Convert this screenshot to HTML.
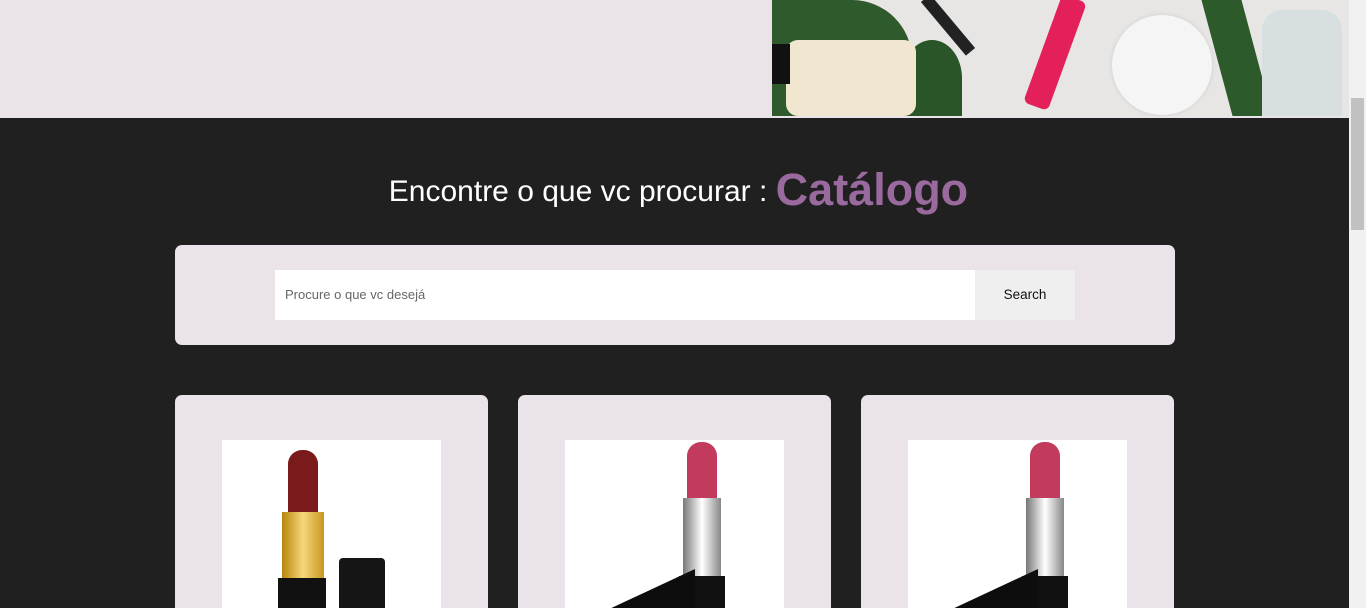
<!DOCTYPE html>
<html><head><meta charset="utf-8"><style>
*{margin:0;padding:0;box-sizing:border-box}
html,body{width:1366px;height:608px;overflow:hidden}
body{background:#202020;font-family:"Liberation Sans",Arial,sans-serif;position:relative}
.top{position:absolute;left:0;top:0;width:1349px;height:118px;background:#ebe3ea}
.img{position:absolute;left:772px;top:0;width:577px;height:116px;background:#e8e6e4;overflow:hidden}
.sb{position:absolute;left:1349px;top:0;width:17px;height:608px;background:#f1f1f1}
.thumb{position:absolute;left:1351px;top:98px;width:13px;height:132px;background:#c1c1c1}
h2{position:absolute;top:164px;left:0;width:1349px;padding-left:8px;text-align:center;color:#fff;font-weight:normal;font-size:30px;white-space:nowrap}
h2 b{color:#9a6a9e;font-size:45px;margin-left:0;vertical-align:-4px}
.search{position:absolute;left:175px;top:245px;width:1000px;height:100px;background:#ebe3ea;border-radius:7px}
.inp{position:absolute;left:100px;top:25px;width:700px;height:50px;background:#fff;color:#666;font-size:13px;padding:17px 10px}
.btn{position:absolute;left:800px;top:25px;width:100px;height:50px;background:#efefef;font-size:13.5px;text-align:center;line-height:50px;color:#111}
.card{position:absolute;top:395px;width:313px;height:213px;background:#ebe3ea;border-radius:7px 7px 0 0;overflow:hidden}
.pic{position:absolute;left:47px;top:45px;width:219px;height:168px;background:#fff;overflow:hidden}
.a{position:absolute}
</style></head><body>
<div class="top"></div>
<div class="img">
 <div class="a" style="left:0;top:0;width:140px;height:116px;background:#2f5a2c;border-radius:0 60px 0 0"></div>
 <div class="a" style="left:130px;top:40px;width:60px;height:76px;background:#2a5528;border-radius:50% 50% 0 0"></div>
 <div class="a" style="left:14px;top:40px;width:130px;height:76px;background:#f1e6cf;border-radius:12px"></div>
 <div class="a" style="left:0;top:44px;width:18px;height:40px;background:#111"></div>
 <div class="a" style="left:170px;top:-10px;width:12px;height:70px;background:#222;transform:rotate(-40deg);"></div>
 <div class="a" style="left:270px;top:-5px;width:26px;height:115px;background:#e4205a;transform:rotate(20deg);border-radius:6px"></div>
 <div class="a" style="left:340px;top:15px;width:100px;height:100px;background:#f5f5f5;border-radius:50%;box-shadow:0 0 4px #ccc"></div>
 <div class="a" style="left:445px;top:0;width:40px;height:116px;background:#2d5a2a;transform:skewX(15deg)"></div>
 <div class="a" style="left:490px;top:10px;width:80px;height:106px;background:#d8dfe0;border-radius:20px 20px 0 0"></div>
</div>
<div class="sb"></div><div class="thumb"></div>
<h2>Encontre o que vc procurar : <b>Catálogo</b></h2>
<div class="search"><div class="inp">Procure o que vc desejá</div><div class="btn">Search</div></div>

<div class="card" style="left:175px"><div class="pic">
 <div class="a" style="left:66px;top:10px;width:30px;height:64px;background:#7a1a1a;border-radius:14px 14px 0 0"></div>
 <div class="a" style="left:60px;top:72px;width:42px;height:68px;background:linear-gradient(90deg,#b8860b,#f5d77a,#c8961f)"></div>
 <div class="a" style="left:56px;top:138px;width:48px;height:70px;background:#111"></div>
 <div class="a" style="left:117px;top:118px;width:46px;height:90px;background:#151515;border-radius:4px"></div>
</div></div>
<div class="card" style="left:518px"><div class="pic">
 <div class="a" style="left:122px;top:2px;width:30px;height:60px;background:#c23a5c;border-radius:14px 14px 0 0"></div>
 <div class="a" style="left:118px;top:58px;width:38px;height:80px;background:linear-gradient(90deg,#777,#fff,#888)"></div>
 <div class="a" style="left:114px;top:136px;width:46px;height:70px;background:#111"></div>
 <div class="a" style="left:40px;top:150px;width:90px;height:60px;background:#0d0d0d;transform:skewY(-25deg)"></div>
</div></div>
<div class="card" style="left:861px"><div class="pic">
 <div class="a" style="left:122px;top:2px;width:30px;height:60px;background:#c23a5c;border-radius:14px 14px 0 0"></div>
 <div class="a" style="left:118px;top:58px;width:38px;height:80px;background:linear-gradient(90deg,#777,#fff,#888)"></div>
 <div class="a" style="left:114px;top:136px;width:46px;height:70px;background:#111"></div>
 <div class="a" style="left:40px;top:150px;width:90px;height:60px;background:#0d0d0d;transform:skewY(-25deg)"></div>
</div></div>
</body></html>
